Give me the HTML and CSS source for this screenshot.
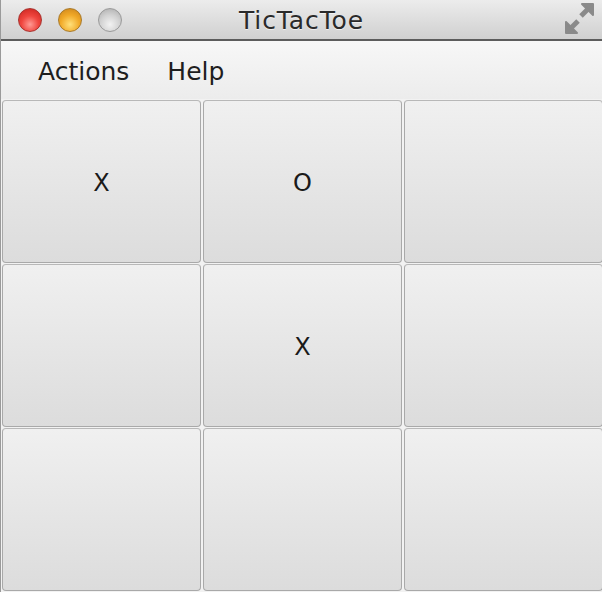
FILE: index.html
```html
<!DOCTYPE html>
<html>
<head>
<meta charset="utf-8">
<link rel="stylesheet" href="styles.css">
<title>TicTacToe</title>
</head>
<body>
<div class="window">
  <div class="titlebar">
    <div class="lights">
      <span class="light red"></span>
      <span class="light yellow"></span>
      <span class="light grey"></span>
    </div>
    <div class="title">TicTacToe</div>
    <svg class="resize" width="40" height="40" viewBox="0 0 40 40">
      <g fill="#8a8a8a" stroke="#8a8a8a" stroke-linejoin="round">
        <polygon points="22,4 33,4 33,15" stroke-width="2"/>
        <line x1="28" y1="9" x2="21" y2="16" stroke-width="5"/>
        <polygon points="6,22 6,33 17,33" stroke-width="2"/>
        <line x1="11" y1="28" x2="18" y2="21" stroke-width="5"/>
      </g>
    </svg>
  </div>
  <div class="menubar">
    <span class="menu">Actions</span>
    <span class="menu">Help</span>
  </div>
  <div class="board">
    <div class="cell">X</div>
    <div class="cell">O</div>
    <div class="cell"></div>
    <div class="cell"></div>
    <div class="cell">X</div>
    <div class="cell"></div>
    <div class="cell"></div>
    <div class="cell"></div>
    <div class="cell"></div>
  </div>
</div>
</body>
</html>
```
FILE: styles.css
```css
html, body {
  margin: 0;
  padding: 0;
  background: #ececec;
}
body {
  width: 602px;
  height: 592px;
  overflow: hidden;
  font-family: "DejaVu Sans", "Open Sans", sans-serif;
  color: #222;
}
.window {
  width: 602px;
  height: 592px;
  display: flex;
  flex-direction: column;
  background: #ebebeb;
  border-left: 1px solid #9a9a9a;
  box-sizing: border-box;
}
.titlebar {
  height: 39px;
  flex: none;
  position: relative;
  display: flex;
  align-items: center;
  justify-content: center;
  background: linear-gradient(#ececec, #d0d0d0);
  border-bottom: 2px solid #5c5c5c;
}
.lights {
  position: absolute;
  left: 17px;
  top: 8px;
  display: flex;
  gap: 16px;
}
.light {
  width: 24px;
  height: 24px;
  border-radius: 50%;
  box-sizing: border-box;
}
.red {
  background: radial-gradient(circle at 50% 70%, #ff9a94 0%, #f0463f 45%, #c7201b 100%);
  border: 1px solid #a8332f;
}
.yellow {
  background: radial-gradient(circle at 50% 70%, #ffe07a 0%, #f1a927 50%, #c8801a 100%);
  border: 1px solid #a97a2a;
}
.grey {
  background: radial-gradient(circle at 50% 70%, #f2f2f2 0%, #d2d2d2 50%, #a9a9a9 100%);
  border: 1px solid #9a9a9a;
}
.title {
  font-size: 25px;
  letter-spacing: 0.9px;
  color: #2a2a2a;
  margin-top: 1px;
  text-shadow: 0 1px 0 rgba(255,255,255,0.6);
}
.resize {
  position: absolute;
  right: 2px;
  top: 0;
}
.menubar {
  height: 58px;
  flex: none;
  display: flex;
  align-items: center;
  gap: 38px;
  padding-left: 37px;
  background: linear-gradient(#f7f7f7, #ececec);
}
.menu {
  font-size: 25px;
  color: #1e1e1e;
  margin-top: 3px;
}
.board {
  display: grid;
  grid-template-columns: 199px 199px 199px;
  grid-template-rows: 163px 163px 163px;
  column-gap: 2px;
  row-gap: 1px;
  padding-left: 1px;
  padding-top: 1px;
  background: #f2f2f2;
  flex: 1;
}
.cell {
  box-sizing: border-box;
  border: 1px solid #a9a9a9;
  border-top-color: #b8b8b8;
  border-radius: 4px;
  background: linear-gradient(#f0f0f0, #dcdcdc);
  display: flex;
  align-items: center;
  justify-content: center;
  font-size: 24px;
  color: #1a1a1a;
  padding-top: 2px;
}
```
